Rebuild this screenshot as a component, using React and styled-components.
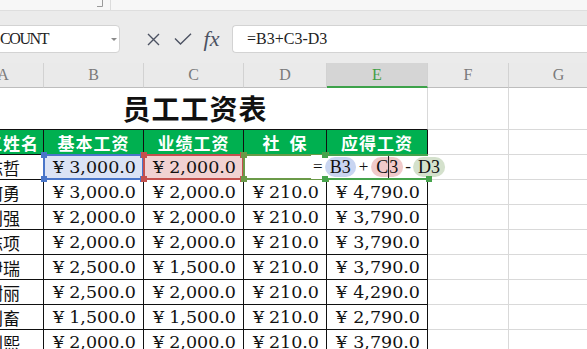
import React from 'react';
import styled, { createGlobalStyle } from 'styled-components';

const GlobalStyle = createGlobalStyle`
  html, body {
    margin: 0;
    padding: 0;
    background: #ffffff;
    overflow: hidden;
  }
  #root {
    width: 587px;
    height: 349px;
    overflow: hidden;
  }
`;

const Window = styled.div`
  width: 587px;
  height: 349px;
  overflow: hidden;
  display: flex;
  flex-direction: column;
  background: #ffffff;
`;

const RibbonEdge = styled.div`
  flex: 0 0 10px;
  display: flex;
  align-items: flex-start;
  padding-left: 96px;
  gap: 6px;
  background: #f7f7f7;
  border-bottom: 1px solid #dedede;
`;

const RibbonDivider = styled.div`
  width: 1px;
  height: 10px;
  background: #dcdcdc;
`;

const FormulaArea = styled.div`
  flex: 0 0 auto;
  padding: 14px 0 10px;
  background: #ebebeb;
`;

const FormulaBar = styled.div`
  display: flex;
  align-items: center;
  height: 28px;
`;

const NameBox = styled.div`
  flex: 0 0 128px;
  margin-left: -8px;
  height: 28px;
  box-sizing: border-box;
  display: flex;
  align-items: center;
  justify-content: space-between;
  padding: 0 2px 0 7px;
  background: #ffffff;
  border: 1px solid #d3d3d3;
  border-radius: 4px;
  font-family: 'Liberation Serif', serif;
  font-size: 16px;
  letter-spacing: -1.4px;
  color: #222;
`;

const DropArrow = styled.span`
  width: 0;
  height: 0;
  border-left: 3px solid transparent;
  border-right: 3px solid transparent;
  border-top: 3px solid #8a8a8a;
`;

const IconGroup = styled.div`
  display: flex;
  align-items: center;
  padding-left: 19px;
  margin-right: 6px;
`;

const IconButton = styled.div`
  width: 29px;
  height: 28px;
  display: flex;
  align-items: center;
  justify-content: center;
  color: #4c5262;
`;

const FxLabel = styled.span`
  font-family: 'Liberation Serif', serif;
  font-style: italic;
  font-size: 22px;
  line-height: 1;
  color: #4c5262;
`;

const FormulaInput = styled.div`
  flex: 1;
  height: 28px;
  box-sizing: border-box;
  display: flex;
  align-items: center;
  padding-left: 14px;
  background: #ffffff;
  border: 1px solid #d3d3d3;
  border-right: none;
  border-radius: 4px 0 0 4px;
  font-family: 'Liberation Serif', serif;
  font-size: 16px;
  color: #1e1e1e;
`;

const Sheet = styled.div`
  display: grid;
  grid-template-columns: 81px 100px 100px 83px 101px 81px 100px;
  grid-template-rows: 25px 42px;
  grid-auto-rows: 25px;
  margin-left: -37px;
  font-family: 'DejaVu Serif', serif;
`;

const ColHead = styled.div`
  box-sizing: border-box;
  display: flex;
  align-items: center;
  justify-content: center;
  background: ${(p) => (p.$active ? '#d5d5d5' : '#eaeaea')};
  border-right: 1px solid #d2d2d2;
  border-bottom: ${(p) => (p.$active ? '2px solid #3da24a' : '1px solid #bdbdbd')};
  font-family: 'Liberation Serif', serif;
  font-size: 16px;
  color: ${(p) => (p.$active ? '#3f9e45' : '#7a7a7a')};
`;

const Cell = styled.div`
  position: relative;
  box-sizing: border-box;
  display: flex;
  align-items: center;
  justify-content: center;
  border-right: 1px solid ${(p) => (p.$grid ? '#d9d9d9' : '#111')};
  border-bottom: 1px solid ${(p) => (p.$grid ? '#d9d9d9' : '#111')};
  background: ${(p) => p.$fill || '#ffffff'};
  color: #111;
`;

const TitleCell = styled(Cell)`
  grid-column: span 5;
  border-right-color: #d9d9d9;
  font-family: 'Noto Sans CJK SC', sans-serif;
  font-weight: 700;
  font-size: 28px;
  letter-spacing: 1px;
  padding-bottom: 2px;
`;

const HeaderCell = styled(Cell)`
  background: #00b050;
  color: #ffffff;
  font-family: 'Noto Sans CJK SC', sans-serif;
  font-weight: 700;
  font-size: 17px;
  letter-spacing: 1px;
  word-spacing: 4px;
  white-space: pre;
`;

const NameCell = styled(Cell)`
  font-family: 'Noto Sans CJK SC', sans-serif;
  font-size: 17px;
`;

const MoneyCell = styled(Cell)`
  justify-content: space-between;
  padding: 0 7px 0 9px;
  font-size: 17.5px;
  white-space: nowrap;
`;

const RefBox = styled.div`
  position: absolute;
  top: -1px;
  left: -1px;
  right: -1px;
  bottom: -1px;
  border: 2px solid ${(p) => p.$color};
  border-left-width: ${(p) => (p.$open ? 0 : 2)}px;
  border-right-width: ${(p) => (p.$open ? 0 : 2)}px;
  pointer-events: none;
  z-index: ${(p) => p.$z || 2};
`;

const Handle = styled.span`
  position: absolute;
  width: 6px;
  height: 6px;
  background: ${(p) => p.$color};
  top: ${(p) => (p.$y === 'top' ? '-4px' : 'auto')};
  bottom: ${(p) => (p.$y === 'bottom' ? '-4px' : 'auto')};
  left: ${(p) => (p.$x === 'left' ? '-4px' : 'auto')};
  right: ${(p) => (p.$x === 'right' ? '-4px' : 'auto')};
`;

const Editor = styled.div`
  position: absolute;
  top: 0;
  bottom: 0;
  left: calc(50% + 2px);
  transform: translateX(-50%);
  display: flex;
  align-items: center;
  gap: 2px;
  padding: 0 2px;
  background: #ffffff;
  z-index: 4;
  white-space: nowrap;
  font-family: 'Liberation Serif', serif;
  font-size: 18px;
  color: #111;
`;

const Operator = styled.span`
  font-size: 17px;
  margin: 0 ${(p) => p.$space || 0}px;
`;

const Chip = styled.span`
  display: inline-flex;
  align-items: center;
  height: 20px;
  padding: 0 5px;
  border-radius: 10px;
  background: ${(p) => p.$bg};
`;

const Caret = styled.span`
  display: inline-block;
  width: 1px;
  height: 25px;
  background: #1a1a1a;
`;

const REF_BLUE = '#4a76c9';
const REF_RED = '#c4514e';
const REF_GREEN = '#6b9a48';
const ACTIVE_GREEN = '#46a44c';

const rows = [
  ['何勇', '3,000.0', '2,000.0', '210.0', '4,790.0'],
  ['刘强', '2,000.0', '2,000.0', '210.0', '3,790.0'],
  ['陈项', '2,000.0', '2,000.0', '210.0', '3,790.0'],
  ['伊瑞', '2,500.0', '1,500.0', '210.0', '3,790.0'],
  ['谢丽', '2,500.0', '2,000.0', '210.0', '4,290.0'],
  ['刘畜', '1,500.0', '1,500.0', '210.0', '2,790.0'],
  ['刘熙', '2,000.0', '2,000.0', '210.0', '3,790.0'],
];

const corners = [
  ['top', 'left'],
  ['top', 'right'],
  ['bottom', 'left'],
  ['bottom', 'right'],
];

const Reference = ({ color, open, z, only }) => (
  <RefBox $color={color} $open={open} $z={z}>
    {corners
      .filter(([y, x]) => !only || only.includes(`${y}-${x}`))
      .map(([y, x]) => (
        <Handle key={y + x} $y={y} $x={x} $color={color} />
      ))}
  </RefBox>
);

const Money = ({ value, fill, children }) => (
  <MoneyCell $fill={fill}>
    <span>¥</span>
    <span>{value}</span>
    {children}
  </MoneyCell>
);

const GridCells = () => (
  <>
    <Cell $grid />
    <Cell $grid />
  </>
);

const App = () => (
  <Window>
    <GlobalStyle />
    <RibbonEdge>
      <svg width="8" height="8" viewBox="0 0 8 8">
        <path d="M6.5 0 V6.5 H1" fill="none" stroke="#9a9a9a" strokeWidth="1" />
      </svg>
      <RibbonDivider />
    </RibbonEdge>

    <FormulaArea>
      <FormulaBar>
        <NameBox>
          <span>COUNT</span>
          <DropArrow />
        </NameBox>
        <IconGroup>
          <IconButton>
            <svg width="13" height="13" viewBox="0 0 13 13">
              <path d="M1 1 L12 12 M12 1 L1 12" stroke="currentColor" strokeWidth="1.4" />
            </svg>
          </IconButton>
          <IconButton>
            <svg width="18" height="12" viewBox="0 0 18 12">
              <path d="M1 5.5 L6.5 11 L17 0.8" fill="none" stroke="currentColor" strokeWidth="1.4" />
            </svg>
          </IconButton>
          <IconButton>
            <FxLabel>fx</FxLabel>
          </IconButton>
        </IconGroup>
        <FormulaInput>=B3+C3-D3</FormulaInput>
      </FormulaBar>
    </FormulaArea>

    <Sheet>
      {['A', 'B', 'C', 'D', 'E', 'F', 'G'].map((c) => (
        <ColHead key={c} $active={c === 'E'}>
          {c}
        </ColHead>
      ))}

      <TitleCell>员工工资表</TitleCell>
      <GridCells />

      {['员工姓名', '基本工资', '业绩工资', '社 保', '应得工资'].map((h) => (
        <HeaderCell key={h}>{h}</HeaderCell>
      ))}
      <GridCells />

      <NameCell>陈哲</NameCell>
      <Money value="3,000.0" fill="#dbe3f5">
        <Reference color={REF_BLUE} />
      </Money>
      <Money value="2,000.0" fill="#f1d2d2">
        <Reference color={REF_RED} />
      </Money>
      <Cell>
        <Reference color={REF_GREEN} z={3} />
      </Cell>
      <Cell>
        <Reference color={ACTIVE_GREEN} open z={5} only={['top-left', 'bottom-left', 'bottom-right']} />
        <Editor>
          <Operator>=</Operator>
          <Chip $bg="#c9d5f1">B3</Chip>
          <Operator $space={1}>+</Operator>
          <Chip $bg="#f0caca">
            C
            <Caret />
            3
          </Chip>
          <Operator>-</Operator>
          <Chip $bg="#d4e1cc">D3</Chip>
        </Editor>
      </Cell>
      <GridCells />

      {rows.map(([name, base, perf, social, total]) => (
        <React.Fragment key={name}>
          <NameCell>{name}</NameCell>
          <Money value={base} />
          <Money value={perf} />
          <Money value={social} />
          <Money value={total} />
          <GridCells />
        </React.Fragment>
      ))}
    </Sheet>
  </Window>
);

export default App;
